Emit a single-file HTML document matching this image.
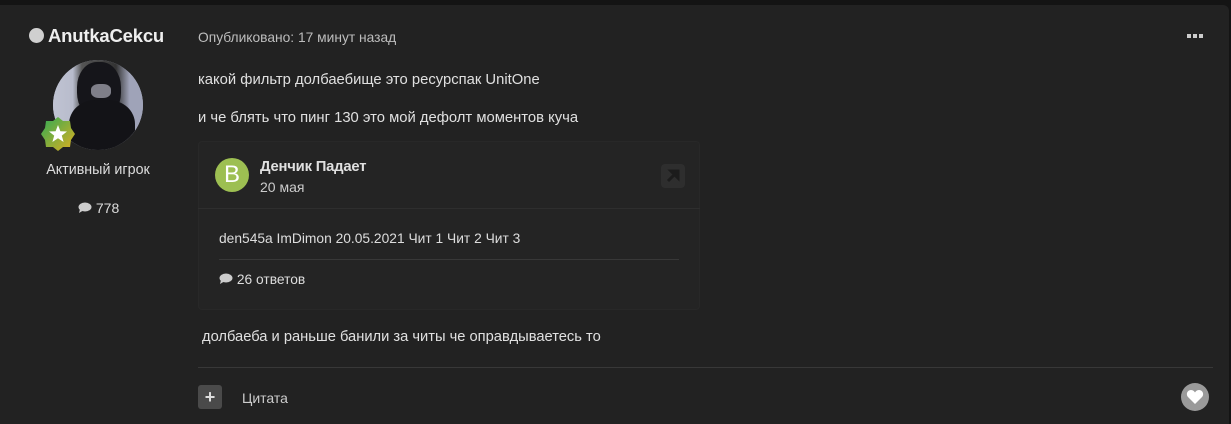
<!DOCTYPE html>
<html><head><meta charset="utf-8"><style>
*{margin:0;padding:0;box-sizing:border-box}
body{width:1231px;height:424px;background:#141414;font-family:"Liberation Sans","DejaVu Sans",sans-serif;overflow:hidden;position:relative}
.card{position:absolute;left:0;top:5px;width:1229px;height:419px;background:#222222;border-radius:0 6px 0 0}
.a{position:absolute;white-space:nowrap}
</style></head><body>
<div class="card"></div>
<div class="a" style="left:29px;top:28px;width:15px;height:15px;border-radius:50%;background:#d0d0d0"></div>
<div class="a" style="left:48px;top:25px;font-size:18.5px;font-weight:bold;color:#eee;letter-spacing:-0.2px">AnutkaCekcu</div>
<div class="a" style="left:53px;top:60px;width:90px;height:90px;border-radius:50%;overflow:hidden;background:#a9acc0;">
 <div style="position:absolute;left:0;top:0;width:90px;height:90px;background:linear-gradient(90deg,#c0c3d2 0,#b8bccc 22%,#555 32%,#333 70%,#9fa3b8 85%)"></div>
 <div style="position:absolute;left:24px;top:2px;width:44px;height:56px;border-radius:45%;background:#15151a"></div>
 <div style="position:absolute;left:16px;top:40px;width:66px;height:60px;border-radius:40%;background:#131317"></div>
 <div style="position:absolute;left:38px;top:24px;width:20px;height:14px;border-radius:40%;background:#7f7f89"></div>
</div>
<svg class="a" style="left:40px;top:116px" width="36" height="36" viewBox="0 0 36 36"><defs><linearGradient id="g" x1="0" y1="0" x2="1" y2="1"><stop offset="0" stop-color="#2eaa55"/><stop offset="1" stop-color="#e0b020"/></linearGradient></defs><polygon points="18,1 23,5 30,5 31,12 35,18 31,24 30,31 23,31 18,35 13,31 6,31 5,24 1,18 5,12 6,5 13,5" fill="url(#g)"/><polygon points="18,9 20.4,15.3 27,15.5 21.8,19.6 23.6,26 18,22.3 12.4,26 14.2,19.6 9,15.5 15.6,15.3" fill="#fff"/></svg>
<div class="a" style="left:0;width:196px;text-align:center;top:162px;font-size:14.3px;color:#ddd">Активный игрок</div>
<div class="a" style="left:78px;top:200px;font-size:14px;color:#ddd"><svg width="14" height="12" viewBox="0 0 14 12" style="vertical-align:-1px"><ellipse cx="7" cy="5" rx="6.5" ry="4.5" fill="#ccc"/><path d="M2 7 L1 11 L6 8Z" fill="#ccc"/></svg> 778</div>
<div class="a" style="left:198px;top:30px;font-size:13.8px;color:#bdbdbd">Опубликовано: 17 минут назад</div>
<div class="a" style="left:1187px;top:34px;width:16px;height:4px;background:repeating-linear-gradient(90deg,#ccc 0,#ccc 4px,transparent 4px,transparent 6px)"></div>
<div class="a" style="left:198px;top:72px;font-size:14.8px;color:#e0e0e0">какой фильтр долбаебище это ресурспак UnitOne</div>
<div class="a" style="left:198px;top:110px;font-size:14.8px;color:#e0e0e0">и че блять что пинг 130 это мой дефолт моментов куча</div>
<div class="a" style="left:198px;top:141px;width:502px;height:169px;background:#242424;border-radius:4px;border:1px solid #282828"></div>
<div class="a" style="left:198px;top:208px;width:502px;height:1px;background:#2e2e2e"></div>
<div class="a" style="left:215px;top:158px;width:34px;height:34px;border-radius:50%;background:#9dbf52;color:#fff;font-size:24px;line-height:34px;text-align:center">B</div>
<div class="a" style="left:260px;top:159px;font-size:14.8px;font-weight:bold;color:#e0e0e0;letter-spacing:-0.2px">Денчик Падает</div>
<div class="a" style="left:260px;top:179px;font-size:14px;color:#ccc">20 мая</div>
<div class="a" style="left:661px;top:164px;width:24px;height:24px;border-radius:4px;background:#2e2e2e"></div>
<svg class="a" style="left:661px;top:164px" width="24" height="24" viewBox="0 0 24 24"><path d="M7 17 L16 8 M10 7 H17 V14Z" stroke="#1c1c1c" stroke-width="3" fill="#1c1c1c"/></svg>
<div class="a" style="left:219px;top:231px;font-size:13.8px;color:#ddd">den545a ImDimon 20.05.2021 Чит 1 Чит 2 Чит 3</div>
<div class="a" style="left:219px;top:259px;width:460px;height:1px;background:#383838"></div>
<div class="a" style="left:219px;top:272px;font-size:13.8px;color:#ddd"><svg width="14" height="12" viewBox="0 0 14 12" style="vertical-align:-1px"><ellipse cx="7" cy="5" rx="6.5" ry="4.5" fill="#ccc"/><path d="M2 7 L1 11 L6 8Z" fill="#ccc"/></svg> 26 ответов</div>
<div class="a" style="left:202px;top:329px;font-size:14.7px;color:#e0e0e0">долбаеба и раньше банили за читы че оправдываетесь то</div>
<div class="a" style="left:198px;top:367px;width:1015px;height:1px;background:#383838"></div>
<div class="a" style="left:198px;top:385px;width:24px;height:24px;border-radius:3px;background:#4a4a4a;color:#ddd;font-size:18px;font-weight:bold;line-height:24px;text-align:center">+</div>
<div class="a" style="left:242px;top:390px;font-size:14px;color:#ccc">Цитата</div>
<div class="a" style="left:1181px;top:383px;width:28px;height:28px;border-radius:50%;background:#9a9a9a"></div>
<svg class="a" style="left:1186px;top:388px" width="18" height="18" viewBox="0 0 18 18"><path d="M9 16 L2 9 C-0.5 6 1.5 2 5 2 C7 2 8.5 3.5 9 4.5 C9.5 3.5 11 2 13 2 C16.5 2 18.5 6 16 9Z" fill="#fff"/></svg>
</body></html>
